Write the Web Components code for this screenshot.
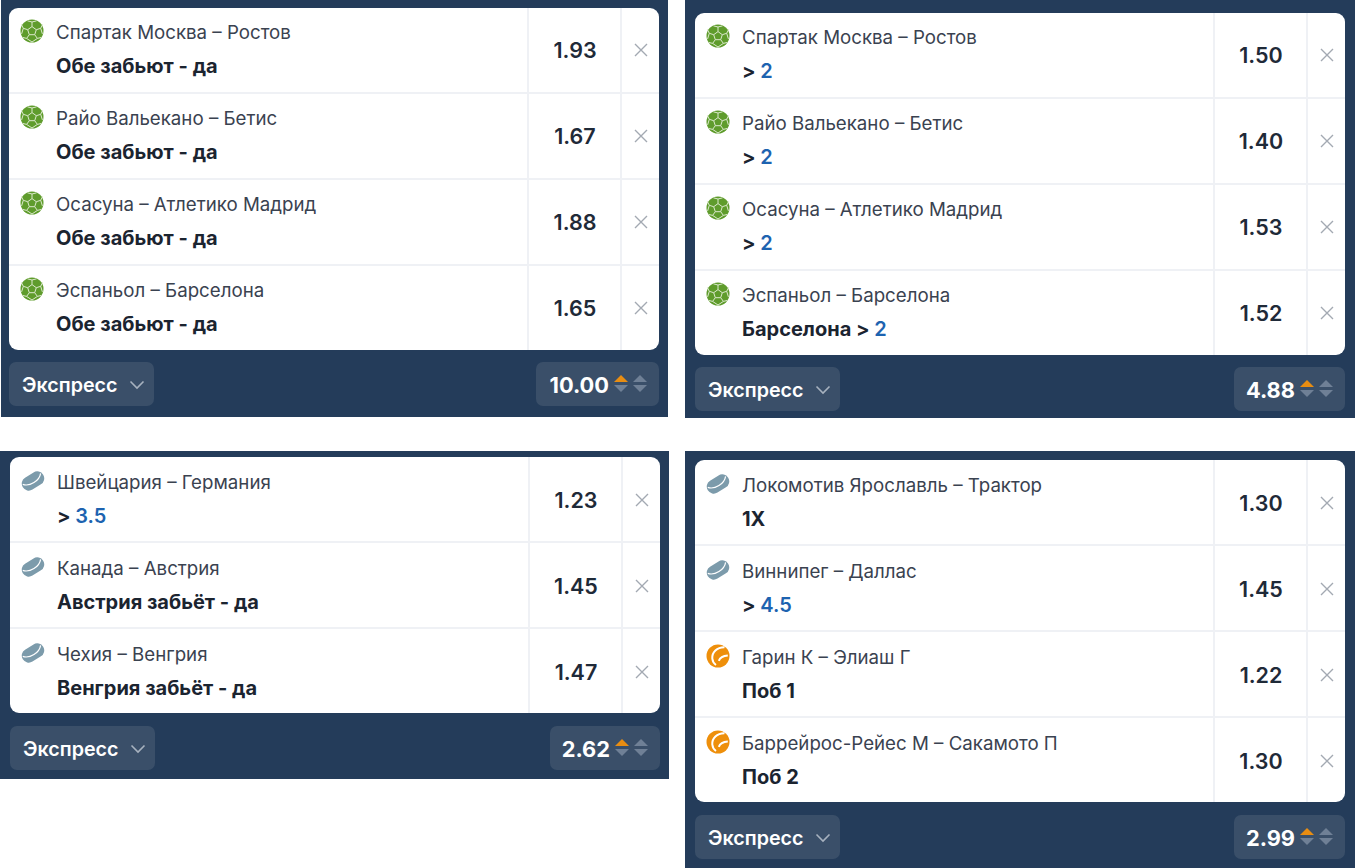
<!DOCTYPE html>
<html lang="ru">
<head>
<meta charset="utf-8">
<title>Экспресс</title>
<style>
html, body { margin: 0; padding: 0; background: #fff; }
body { font-family: Inter, "Liberation Sans", sans-serif; }
#page {
  display: grid;
  grid-template-columns: 669px 670px;
  grid-template-rows: 451px auto;
  column-gap: 16px;
  align-items: start;
}
</style>
</head>
<body>
<div id="page">
  <bet-panel total="10.00" style="--pad: 8px 9px 11px 8px; --total-pad: 14px; margin: 0 1px 0 1px;">
    <bet-row sport="soccer" match="Спартак Москва – Ростов" odds="1.93">Обе забьют - да</bet-row>
    <bet-row sport="soccer" match="Райо Вальекано – Бетис" odds="1.67">Обе забьют - да</bet-row>
    <bet-row sport="soccer" match="Осасуна – Атлетико Мадрид" odds="1.88">Обе забьют - да</bet-row>
    <bet-row sport="soccer" match="Эспаньол – Барселона" odds="1.65" last>Обе забьют - да</bet-row>
  </bet-panel>
  <bet-panel total="4.88" style="--pad: 13px 10px 7px 10px;">
    <bet-row sport="soccer" match="Спартак Москва – Ростов" odds="1.50">&gt; <bet-val>2</bet-val></bet-row>
    <bet-row sport="soccer" match="Райо Вальекано – Бетис" odds="1.40">&gt; <bet-val>2</bet-val></bet-row>
    <bet-row sport="soccer" match="Осасуна – Атлетико Мадрид" odds="1.53">&gt; <bet-val>2</bet-val></bet-row>
    <bet-row sport="soccer" match="Эспаньол – Барселона" odds="1.52" last>Барселона &gt; <bet-val>2</bet-val></bet-row>
  </bet-panel>
  <bet-panel total="2.62" style="--pad: 6px 9px 9px 10px; --gap: 13px; --shift: 1px;">
    <bet-row sport="hockey" match="Швейцария – Германия" odds="1.23">&gt; <bet-val>3.5</bet-val></bet-row>
    <bet-row sport="hockey" match="Канада – Австрия" odds="1.45">Австрия забьёт - да</bet-row>
    <bet-row sport="hockey" match="Чехия – Венгрия" odds="1.47" last>Венгрия забьёт - да</bet-row>
  </bet-panel>
  <bet-panel total="2.99" style="--pad: 9px 10px 9px 10px; --gap: 13px; --shift: 1px;">
    <bet-row sport="hockey" match="Локомотив Ярославль – Трактор" odds="1.30">1X</bet-row>
    <bet-row sport="hockey" match="Виннипег – Даллас" odds="1.45">&gt; <bet-val>4.5</bet-val></bet-row>
    <bet-row sport="tennis" match="Гарин К – Элиаш Г" odds="1.22">Поб 1</bet-row>
    <bet-row sport="tennis" match="Баррейрос-Рейес М – Сакамото П" odds="1.30" last>Поб 2</bet-row>
  </bet-panel>
</div>

<script>
// Sport icons, drawn on a 24x24 box.
const sportIcons = {
  soccer: `<svg viewBox="0 0 24 24" width="24" height="24">
    <circle cx="12" cy="12" r="11.5" fill="#5f9c2c"/>
    <g fill="none" stroke="#dce9cd" stroke-width="1">
      <path d="M12 7.6l4.3 3.1-1.6 5h-5.4l-1.6-5z"/>
      <path d="M12 7.6V3M16.3 10.7l4.4-1.4M14.7 15.7l2.7 3.7M9.3 15.7l-2.7 3.7M7.7 10.7L3.3 9.3"/>
      <path d="M7.4 1.8L12 3l4.6-1.2M20.7 9.3l2-4M20.7 9.3l1.7 5.6M17.4 19.4l4-1M17.4 19.4L12 23l-5.4-3.6M6.6 19.4l-4-1M3.3 9.3l-1.7 5.6M3.3 9.3l-2-4"/>
    </g>
  </svg>`,
  hockey: `<svg viewBox="0 0 24 24" width="24" height="24">
    <g transform="rotate(-32 12 12)">
      <rect x="0" y="5" width="24" height="14" rx="7" fill="#7c9bab"/>
      <path d="M1.500 9.500c2.500 3 6 4.300 10.500 4.300s8-1.300 10.500-4.300" fill="none" stroke="#fff" stroke-width="1.200"/>
    </g>
  </svg>`,
  tennis: `<svg viewBox="0 0 24 24" width="24" height="24">
    <circle cx="12" cy="12" r="11.500" fill="#ee8f0b"/>
    <path d="M18.500 3.200C11 3 5.800 8.500 6.300 14.500c.3 2.800 1.500 5 3.700 6.500" fill="none" stroke="#fff" stroke-width="2"/>
    <path d="M21.800 11.500C17.500 11.800 14 13.500 12.800 16.800" fill="none" stroke="#fff" stroke-width="2"/>
  </svg>`
}

customElements.define('bet-val',
  /**
   * Blue part of a selection, the line value.
   */
  class extends HTMLElement {
    constructor () {
      super()
      this.attachShadow({ mode: 'open' }).innerHTML = `
<style>
:host { display: inline; color: #1d63b0; font-weight: 600; }
</style>
<slot></slot>`
    }
  }
)

customElements.define('bet-row',
  /**
   * One leg of the coupon: sport icon, match, selection, odds and remove cross.
   */
  class extends HTMLElement {
    constructor () {
      super()
      const last = this.hasAttribute('last')
      this.attachShadow({ mode: 'open' }).innerHTML = `
<style>
:host {
  display: grid;
  grid-template-columns: 518px 93px 1fr;
  height: ${last ? 84 : 86}px;
  box-sizing: border-box;
  border-bottom: ${last ? 0 : '2px solid #eff1f5'};
  color: #1b2430;
}
.info {
  display: grid;
  grid-template-columns: 47px 1fr;
  padding: calc(12px + var(--shift, 0px)) 0 0 0;
  align-content: start;
}
.icon { width: 24px; height: 24px; margin: -1px 0 0 11px; }
.icon svg { display: block; }
.match { font-size: 18.700px; line-height: 26px; color: #3a4250; white-space: nowrap; }
.sel { font-size: 20px; line-height: 26px; font-weight: 700; margin-top: 7px; white-space: nowrap; }
.odds {
  display: flex; align-items: center; justify-content: center;
  border-left: 2px solid #eff1f5;
  font-size: 21.500px; font-weight: 600; color: #1f2a38;
  padding: calc(var(--shift, 0px) * 2) 0 0 1px;
}
.close {
  display: flex; align-items: center; justify-content: center;
  border-left: 2px solid #eff1f5;
  padding-top: calc(var(--shift, 0px) * 2);
}
</style>
<div class="info">
  <div class="icon">${sportIcons[this.getAttribute('sport')]}</div>
  <div>
    <div class="match">${this.getAttribute('match')}</div>
    <div class="sel"><slot></slot></div>
  </div>
</div>
<div class="odds">${this.getAttribute('odds')}</div>
<div class="close">
  <svg viewBox="0 0 14 14" width="14" height="14"><path d="M1 1l12 12M13 1L1 13" stroke="#a3a9b2" stroke-width="1.400" fill="none"/></svg>
</div>`
    }
  }
)

customElements.define('bet-panel',
  /**
   * Dark panel with the white card of rows and the footer under it.
   */
  class extends HTMLElement {
    constructor () {
      super()
      this.attachShadow({ mode: 'open' }).innerHTML = `
<style>
:host {
  display: block;
  background: #243c5a;
  padding: var(--pad);
  font-family: Inter, "Liberation Sans", sans-serif;
}
.card { background: #fff; border-radius: 9px; overflow: hidden; }
.footer {
  display: flex; justify-content: space-between;
  margin-top: var(--gap, 12px);
  color: #fff;
  font-weight: 600;
  font-size: 19.700px;
}
.type, .total {
  display: flex; align-items: center;
  height: 44px;
  background: #3a4f69;
  border-radius: 7px;
}
.type { width: 145px; box-sizing: border-box; padding-left: 13px; gap: 11px; }
.type span, .type svg, .total span { margin-top: 2px; }
.total { padding: 0 12px 0 var(--total-pad, 12px); font-size: 21.800px; font-weight: 700; gap: 5px; }
.arrows { display: flex; gap: 5px; }
</style>
<div class="card"><slot></slot></div>
<div class="footer">
  <div class="type">
    <span>Экспресс</span>
    <svg viewBox="0 0 16 10" width="16" height="10"><path d="M1.500 1.500L8 8l6.500-6.500" fill="none" stroke="#a7b2bf" stroke-width="1.600"/></svg>
  </div>
  <div class="total">
    <span>${this.getAttribute('total')}</span>
    <div class="arrows">
      <svg viewBox="0 0 14 18" width="14" height="18"><path d="M7 0l7 7H0z" fill="#e88d12"/><path d="M0 10h14l-7 7z" fill="#6f8096"/></svg>
      <svg viewBox="0 0 14 18" width="14" height="18"><path d="M7 0l7 7H0z" fill="#6f8096"/><path d="M0 10h14l-7 7z" fill="#6f8096"/></svg>
    </div>
  </div>
</div>`
    }
  }
)
</script>
</body>
</html>
